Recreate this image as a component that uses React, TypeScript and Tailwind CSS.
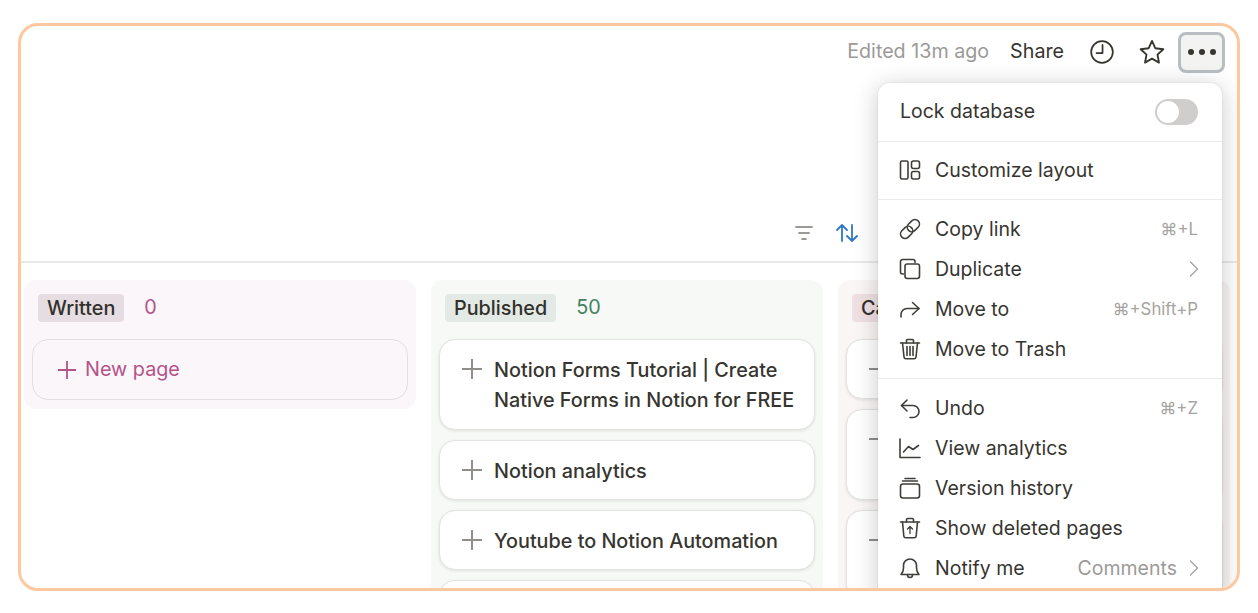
import { ChevronRight } from "lucide-react";
import type { ReactNode } from "react";

const fontStack = "font-['Inter','Liberation_Sans',sans-serif]";

function Icon({ children, className = "size-6" }: { children: ReactNode; className?: string }) {
    return (
        <svg
            viewBox="0 0 24 24"
            fill="none"
            stroke="currentColor"
            strokeWidth="1.6"
            strokeLinecap="round"
            strokeLinejoin="round"
            className={className}
        >
            {children}
        </svg>
    );
}

function PlusIcon({ className }: { className: string }) {
    return (
        <svg viewBox="0 0 20 20" fill="none" stroke="currentColor" strokeWidth="2" className={className}>
            <path d="M10 0v20M0 10h20" />
        </svg>
    );
}

const icons = {
    layout: (
        <>
            <rect x="2.5" y="3" width="7.5" height="18" rx="1.5" />
            <rect x="13.5" y="3" width="8" height="7.5" rx="2" />
            <rect x="13.5" y="13.5" width="8" height="7.5" rx="2" />
        </>
    ),
    link: (
        <g transform="rotate(-45 12 12)">
            <rect x="0.5" y="7.5" width="13.5" height="9" rx="4.5" />
            <rect x="10" y="7.5" width="13.5" height="9" rx="4.5" />
        </g>
    ),
    duplicate: (
        <>
            <path d="M5.5 17H4.5a2 2 0 0 1-2-2V4.5a2 2 0 0 1 2-2H15a2 2 0 0 1 2 2v1" />
            <rect x="7" y="7" width="14.5" height="14.5" rx="2.2" />
        </>
    ),
    moveTo: (
        <>
            <path d="M14.5 5.5 21 11.5 14.5 17.5" />
            <path d="M21 11.5H9a6 6 0 0 0-6 6V20" />
        </>
    ),
    trash: (
        <>
            <path d="M2.5 6h19" />
            <path d="M8.5 6V3.5a1 1 0 0 1 1-1h5a1 1 0 0 1 1 1V6" />
            <path d="M4.5 6 6 20a2 2 0 0 0 2 1.8h8a2 2 0 0 0 2-1.8L19.500 6" />
            <path d="M9 9.500v9M12 9.500v9M15 9.500v9" />
        </>
    ),
    undo: (
        <>
            <path d="M9 4 3.500 9.500 9 15" />
            <path d="M3.500 9.500H15a6 6 0 0 1 0 12h-3" />
        </>
    ),
    analytics: (
        <>
            <path d="M2 3v18.500h20" />
            <path d="m5.500 16 5-5.500 4.500 3 5.500-4" />
        </>
    ),
    history: (
        <>
            <rect x="2.500" y="8" width="19" height="14" rx="2.500" />
            <path d="M4.500 5h15M7 2.500h10" />
        </>
    ),
    restore: (
        <>
            <path d="M2.500 6h19" />
            <path d="M8.500 6V3.500a1 1 0 0 1 1-1h5a1 1 0 0 1 1 1V6" />
            <path d="M4.500 6 5.800 20a2 2 0 0 0 2 1.800h8.400a2 2 0 0 0 2-1.800L19.500 6" />
            <path d="M12 17.500v-7M9.500 13 12 10.500l2.500 2.500" strokeWidth="1.300" />
        </>
    ),
    bell: (
        <>
            <path d="M3 18.500c1.500-1.500 2.500-3 2.500-6.500V9.500a6.500 6.500 0 0 1 13 0V12c0 3.500 1 5 2.500 6.500z" />
            <path d="M9.500 18.500v.5a2.500 2.500 0 0 0 5 0v-.5" />
        </>
    ),
};

function MenuRow({ icon, label, shortcut, value, chevron }: {
    icon: ReactNode;
    label: string;
    shortcut?: string;
    value?: string;
    chevron?: boolean;
}) {
    return (
        <div className="flex h-10 items-center pr-[24px] pl-5 text-[#37352f]">
            <Icon className="mr-[13px] size-[24px] shrink-0 text-[#3f3e3a]">{icon}</Icon>
            <span className="flex-1 pt-[2px]">{label}</span>
            {shortcut && <span className="pt-[2px] text-[16.800px] text-[#a5a4a0]">{shortcut}</span>}
            {value && <span className="mr-[3px] pt-[2px] text-[#9b9a97]">{value}</span>}
            {chevron && <ChevronRight className="-mr-[10px] size-[28px] text-[#a5a4a0]" strokeWidth={1.2} />}
        </div>
    );
}

function Divider() {
    return <div className="h-px bg-[#ebebea]" />;
}

function PageMenu() {
    return (
        <div className="absolute top-[57px] left-[857px] h-[520px] w-[344px] rounded-t-[12px] bg-white text-[19.500px] shadow-[0_4px_24px_rgba(15,15,15,0.22),0_0_0_1px_rgba(15,15,15,0.04)]">
            <div className="flex h-[58px] items-center justify-between pr-[24px] pl-[22px] text-[#37352f]">
                <span>Lock database</span>
                <div className="flex h-[26px] w-[43px] items-center rounded-full bg-[#cfcecd] p-[2px]">
                    <div className="size-[22px] rounded-full bg-white" />
                </div>
            </div>
            <Divider />
            <div className="pt-[8px] pb-[9px]">
                <MenuRow icon={icons.layout} label="Customize layout" />
            </div>
            <Divider />
            <div className="py-[9px]">
                <MenuRow icon={icons.link} label="Copy link" shortcut="⌘+L" />
                <MenuRow icon={icons.duplicate} label="Duplicate" chevron />
                <MenuRow icon={icons.moveTo} label="Move to" shortcut="⌘+Shift+P" />
                <MenuRow icon={icons.trash} label="Move to Trash" />
            </div>
            <Divider />
            <div className="py-[9px]">
                <MenuRow icon={icons.undo} label="Undo" shortcut="⌘+Z" />
                <MenuRow icon={icons.analytics} label="View analytics" />
                <MenuRow icon={icons.history} label="Version history" />
                <MenuRow icon={icons.restore} label="Show deleted pages" />
                <MenuRow icon={icons.bell} label="Notify me" value="Comments" chevron />
            </div>
        </div>
    );
}

function TopBar() {
    return (
        <div className="flex h-[50px] items-center justify-end pt-[2px] pr-[13px] text-[19.700px]">
            <span className="mr-[21px] text-[#9b9a97]">Edited 13m ago</span>
            <span className="mr-[25px] text-[#37352f]">Share</span>
            <Icon className="mr-[23px] size-[26px] text-[#37352f]">
                <circle cx="12" cy="12" r="10" />
                <path d="M12.500 5.500v7.500H7" />
            </Icon>
            <svg viewBox="0 0 24 24" fill="none" stroke="#37352f" strokeWidth="1.600" strokeLinejoin="round" className="mr-[12px] size-[28px]">
                <path d="m12 2.500 2.900 6.300 6.800.8-5 4.700 1.300 6.800-6-3.400-6 3.400 1.300-6.800-5-4.700 6.800-.8z" />
            </svg>
            <div className="-mr-[1px] flex h-[41px] w-[47px] items-center justify-center gap-[5px] rounded-[8px] border-[3px] border-[#b9bec2] bg-[#f3f3f2]">
                <span className="size-[6px] rounded-full bg-[#37352f]" />
                <span className="size-[6px] rounded-full bg-[#37352f]" />
                <span className="size-[6px] rounded-full bg-[#37352f]" />
            </div>
        </div>
    );
}

function ViewTools() {
    return (
        <div className="flex h-[187px] items-start justify-start border-b-2 border-[#e9e9e7] pt-[145px] pl-[771px]">
            <svg viewBox="0 0 24 24" fill="none" stroke="#9b9a97" strokeWidth="1.800" strokeLinecap="round" className="mr-[19px] size-[24px]">
                <path d="M4 6h16M7 12h10M10 18h4" />
            </svg>
            <svg viewBox="0 0 24 24" fill="none" stroke="#2f76c8" strokeWidth="1.800" strokeLinecap="round" strokeLinejoin="round" className="size-[24px]">
                <path d="M7 20V4M2 9l5-5 5 5" />
                <path d="M17 4v16M12 15l5 5 5-5" />
            </svg>
        </div>
    );
}

function PageCard({ title, height }: { title?: ReactNode; height: string }) {
    return (
        <div className={`flex shrink-0 items-start gap-[12px] rounded-[16px] border border-[#e3e3e1] bg-white pt-[14px] pr-[10px] pl-[22px] text-[19.800px] leading-[30px] font-medium text-[#37352f] shadow-[0_1px_3px_rgba(15,15,15,0.1)] ${height}`}>
            <PlusIcon className="mt-[5px] size-[20px] shrink-0 text-[#8f8e8b]" />
            {title && <span className="pt-[1px] whitespace-nowrap">{title}</span>}
        </div>
    );
}

function Board() {
    return (
        <div className="flex items-start gap-[15px] pt-[17px] pl-[3px] text-[19.800px]">
            <section className="w-[392px] shrink-0 rounded-[12px] bg-[#faf6fa] px-[8px] pt-[14px] pb-[9px]">
                <div className="flex h-[28px] items-center pl-[6px]">
                    <span className="rounded-[4px] bg-[#e6dde2] px-[9px] leading-[28px] font-medium text-[#32302c]">Written</span>
                    <span className="ml-[20px] text-[#b35488]">0</span>
                </div>
                <div className="mt-[17px] flex h-[61px] items-center gap-[9px] rounded-[16px] border border-[#e4dee2] px-[25px] text-[#b35488]">
                    <PlusIcon className="size-[18px]" />
                    New page
                </div>
            </section>
            <section className="flex h-[400px] w-[392px] shrink-0 flex-col rounded-t-[12px] bg-[#f6f9f6] px-[8px] pt-[14px]">
                <div className="flex h-[28px] items-center pl-[6px]">
                    <span className="rounded-[4px] bg-[#e3e9e4] px-[9px] leading-[28px] font-medium text-[#32302c]">Published</span>
                    <span className="ml-[20px] text-[#448361]">50</span>
                </div>
                <div className="mt-[17px] flex flex-col gap-[10px]">
                    <PageCard height="h-[91px]" title={<>Notion Forms Tutorial | Create<br />Native Forms in Notion for FREE</>} />
                    <PageCard height="h-[60px]" title="Notion analytics" />
                    <PageCard height="h-[60px]" title="Youtube to Notion Automation" />
                    <PageCard height="h-[60px]" />
                </div>
            </section>
            <section className="flex h-[400px] w-[392px] shrink-0 flex-col rounded-t-[12px] bg-[#fbf6f6] px-[8px] pt-[14px]">
                <div className="flex h-[28px] items-center pl-[6px]">
                    <span className="rounded-[4px] bg-[#efe0e3] px-[9px] leading-[28px] font-medium text-[#32302c]">Ca</span>
                </div>
                <div className="mt-[17px] flex flex-col gap-[10px]">
                    <PageCard height="h-[60px]" />
                    <PageCard height="h-[91px]" />
                    <PageCard height="h-[91px]" />
                </div>
            </section>
        </div>
    );
}

export default function App() {
    return (
        <div className={`h-[613px] w-[1258px] overflow-hidden bg-white pt-[23px] pl-[18px] ${fontStack}`}>
            <div className="relative h-[568px] w-[1222px] overflow-hidden rounded-[20px] border-[3px] border-[#fdc89f] bg-white">
                <TopBar />
                <ViewTools />
                <Board />
                <PageMenu />
            </div>
        </div>
    );
}
